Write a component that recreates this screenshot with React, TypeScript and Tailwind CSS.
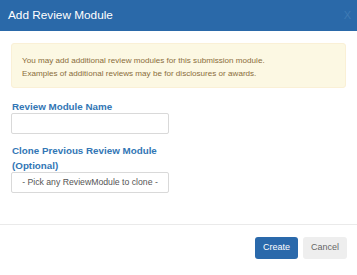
import React from "react";

export default function App() {
  return (
    <div
      className="w-[357px] h-[275px] bg-white flex flex-col"
      style={{ fontFamily: '"Liberation Sans", Arial, sans-serif' }}
    >
      <div className="h-[31px] bg-[#2a69a9] flex items-center justify-between pl-[8px] pr-[6px]">
        <span className="text-white text-[11.8px] leading-none">Add Review Module</span>
        <span className="text-[#3f7bb5] text-[11px] leading-none">X</span>
      </div>
      <div className="px-[11px] pt-[12px]">
        <div className="h-[45px] bg-[#fcf8e3] border border-[#faf0d6] rounded-[3px] pl-[10px] pt-[11px] text-[8.1px] leading-[12.5px] text-[#8a6d3b]">
          <div>You may add additional review modules for this submission module.</div>
          <div>Examples of additional reviews may be for disclosures or awards.</div>
        </div>
        <div className="mt-[12px] pl-[1px] text-[9.8px] font-bold text-[#3276b5] leading-[14px]">Review Module Name</div>
        <div className="mt-[-1px] w-[158px] h-[21px] border border-[#d9d9d9] rounded-[2px]"></div>
        <div className="mt-[10px] pl-[1px] text-[9.8px] font-bold text-[#3276b5] leading-[14.5px]">
          Clone Previous Review Module
          <br />
          (Optional)
        </div>
        <div className="mt-[-1px] w-[158px] h-[21px] border border-[#d9d9d9] rounded-[2px] flex items-center justify-center text-[8.7px] text-[#555]">
          - Pick any ReviewModule to clone -
        </div>
      </div>
      <div className="mt-[31px] border-t border-[#eaeaea]"></div>
      <div className="flex justify-end gap-[5px] pr-[10px] pt-[12px]">
        <div className="w-[43px] h-[22px] bg-[#2a69ab] rounded-[3px] text-white text-[9px] flex items-center justify-center">
          Create
        </div>
        <div className="w-[44px] h-[22px] bg-[#eeeeee] rounded-[3px] text-[#666] text-[9px] flex items-center justify-center">
          Cancel
        </div>
      </div>
    </div>
  );
}
